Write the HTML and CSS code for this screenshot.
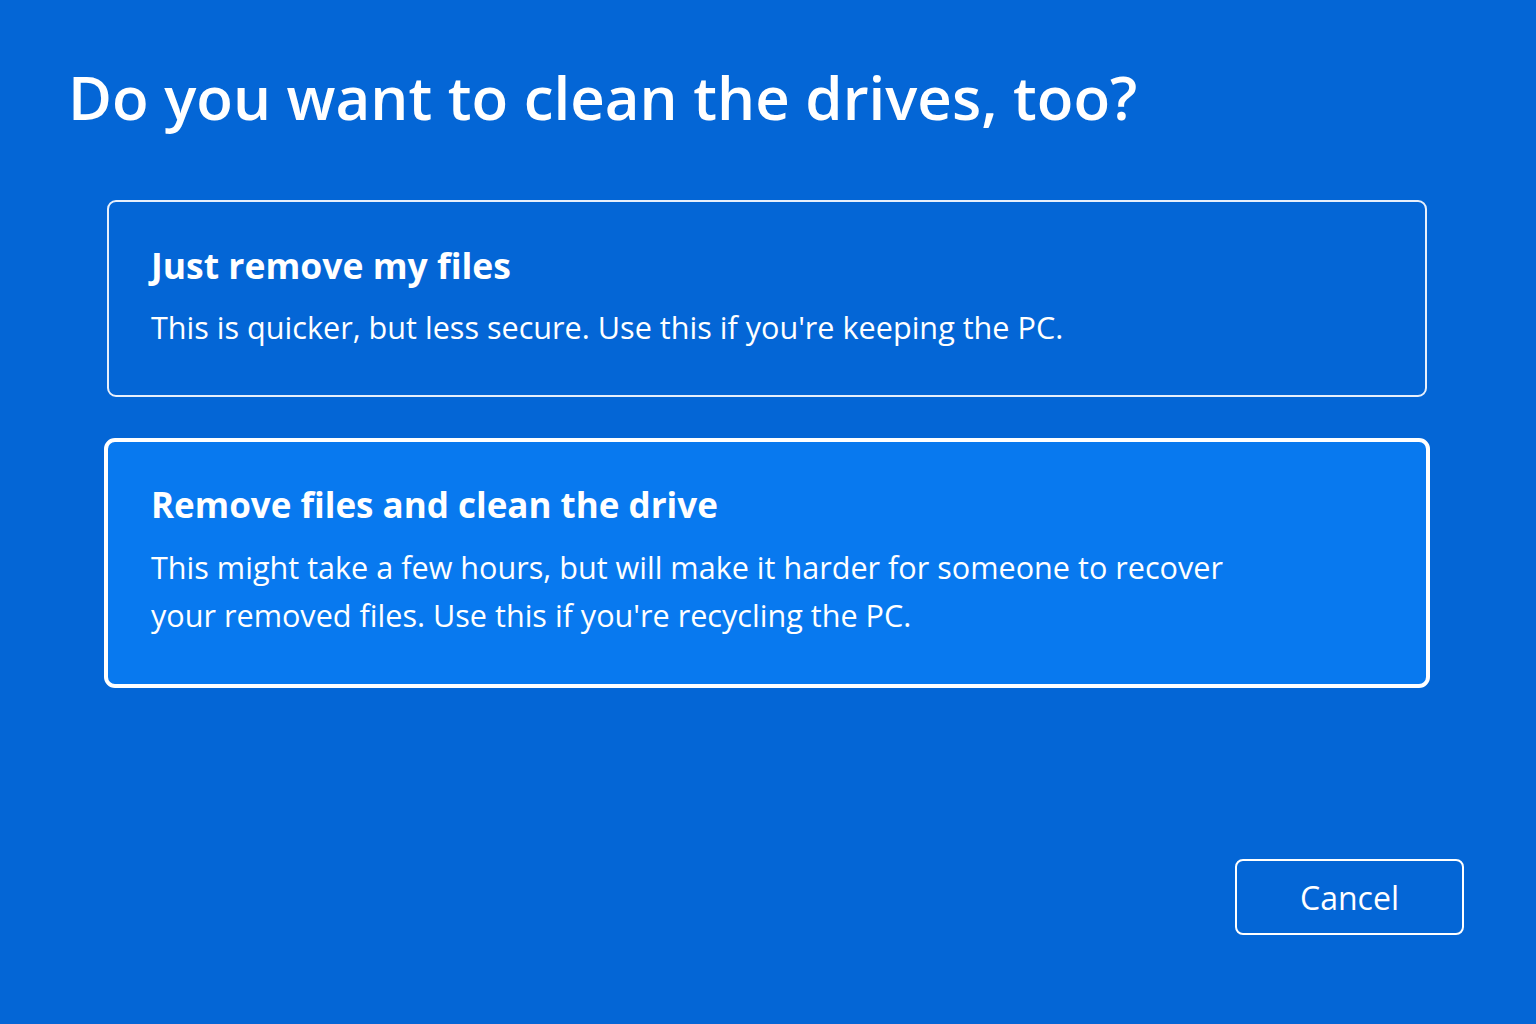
FILE: index.html
```html
<!DOCTYPE html>
<html lang="en">
<head>
<meta charset="utf-8">
<title>Reset this PC</title>
<link rel="stylesheet" href="styles.css">
</head>
<body>
<main class="page">
  <h1 class="title">Do you want to clean the drives, too?</h1>
  <div class="options">
    <div class="option">
      <div class="option-title">Just remove my files</div>
      <div class="option-desc">This is quicker, but less secure. Use this if you're keeping the PC.</div>
    </div>
    <div class="option selected">
      <div class="option-title">Remove files and clean the drive</div>
      <div class="option-desc">This might take a few hours, but will make it harder for someone to recover<br>your removed files. Use this if you're recycling the PC.</div>
    </div>
  </div>
  <div class="footer">
    <button class="btn">Cancel</button>
  </div>
</main>
</body>
</html>
```
FILE: styles.css
```css
html, body {
  margin: 0;
  padding: 0;
  height: 100%;
}
body {
  background: #0466d6;
  color: #ffffff;
  font-family: "Open Sans", "Noto Sans", sans-serif;
}
.page {
  box-sizing: border-box;
  height: 1024px;
  padding: 57px 72px 0 68px;
  display: flex;
  flex-direction: column;
}
.title {
  margin: 0;
  font-size: 60px;
  font-weight: 600;
  line-height: 80px;
}
.options {
  margin: 63px 37px 0 39px;
  display: flex;
  flex-direction: column;
  gap: 41px;
}
.option {
  border: 2px solid #e8f0fc;
  border-radius: 9px;
  padding: 38px 44px 36px 42px;
  height: 197px;
  box-sizing: border-box;
}
.option.selected {
  background: #0879ef;
  border: 4px solid #ffffff;
  border-radius: 11px;
  margin: 0 -3px;
  height: 250px;
  padding: 38px 44px 36px 43px;
}
.option-title {
  font-size: 35.5px;
  font-weight: 700;
  line-height: 50px;
}
.selected .option-title {
  font-size: 35px;
}
.option-desc {
  font-size: 30.6px;
  line-height: 48px;
  margin-top: 13px;
}
.footer {
  margin-top: auto;
  margin-bottom: 89px;
  display: flex;
  justify-content: flex-end;
}
.btn {
  width: 229px;
  height: 76px;
  box-sizing: border-box;
  background: transparent;
  border: 2px solid #ffffff;
  border-radius: 8px;
  color: #ffffff;
  font-family: inherit;
  font-size: 32px;
}
```
